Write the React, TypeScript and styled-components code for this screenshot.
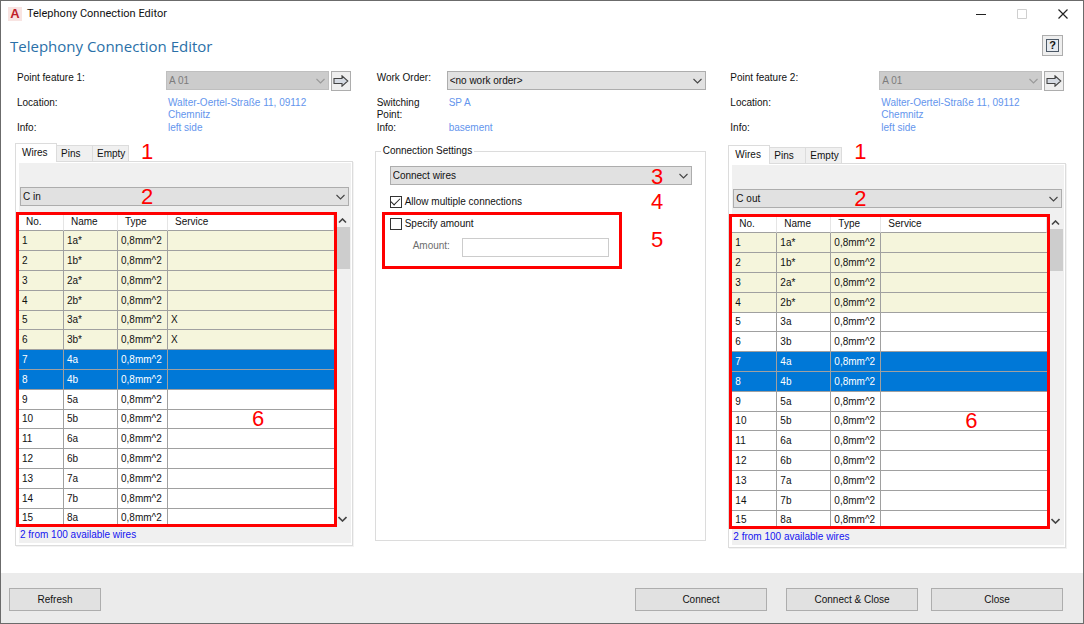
import React, { useState } from "react";
import styled, { createGlobalStyle } from "styled-components";

const GlobalStyle = createGlobalStyle`
  * { box-sizing: border-box; }
  body {
    margin: 0;
    background: #fff;
    color: #111;
    font: 10px/12px "Liberation Sans", Arial, sans-serif;
  }
  button, input, select { font: inherit; color: inherit; margin: 0; border-radius: 0; }
`;

const Window = styled.div`
  display: flex;
  flex-direction: column;
  min-height: 100vh;
  border: 1px solid #6b6b6b;
`;

const TitleBar = styled.header`
  display: flex;
  align-items: center;
  height: 26px;
  padding-left: 7px;
  font: 11px/16px Roboto, "Open Sans", sans-serif;
`;

const Logo = styled.span`
  width: 14px;
  height: 14px;
  margin-right: 5px;
  background: #f8e4e2;
  color: #c01f2a;
  font: bold 13px/13px "Liberation Sans", sans-serif;
  text-align: center;
`;

const TitleText = styled.span`
  flex: 1;
`;

const CaptionButton = styled.button<{ $faded?: boolean }>`
  display: grid;
  place-items: center;
  width: 41px;
  height: 26px;
  padding: 0;
  border: 0;
  background: none;
  color: ${(p) => (p.$faded ? "#cfcfcf" : "#222")};
`;

const Heading = styled.div`
  display: flex;
  align-items: center;
  justify-content: space-between;
  height: 37px;
  padding: 0 20px 0 9px;
`;

const HeadingText = styled.h1`
  margin: 0;
  color: #2a70a8;
  font: 15px/20px "Open Sans", "Noto Sans", sans-serif;
`;

const IconButton = styled.button<{ $size: number }>`
  display: grid;
  place-items: center;
  flex: none;
  width: ${(p) => p.$size}px;
  height: ${(p) => p.$size}px;
  padding: 0;
  border: 1px solid #adadad;
  background: #eee;
`;

const Columns = styled.main`
  display: grid;
  grid-template-columns: 338fr 332fr 338fr;
  column-gap: 22px;
  padding: 7px 17px 24px 14px;
`;

const Column = styled.section`
  position: relative;
  min-width: 0;
`;

const Details = styled.div<{ $label: number }>`
  display: grid;
  grid-template-columns: ${(p) => p.$label}px 1fr;
  grid-template-rows: 26px 25px 12px;
  padding-left: 2px;
  height: 66px;
`;

const Label = styled.label`
  padding-top: 1px;
`;

const Caption = styled.span<{ $narrow?: boolean }>`
  width: ${(p) => (p.$narrow ? "50px" : "auto")};
`;

const Value = styled.span`
  max-width: 160px;
  padding-left: 2px;
  color: #6495ed;
`;

const PickerRow = styled.div<{ $inset?: boolean }>`
  display: flex;
  align-items: flex-start;
  gap: 2px;
  padding-right: ${(p) => (p.$inset ? 2 : 0)}px;
`;

const SelectBox = styled.div`
  position: relative;
  flex: 1;
  min-width: 0;
  height: 20px;

  svg {
    position: absolute;
    right: 4px;
    top: 7px;
    pointer-events: none;
  }
`;

const Select = styled.select`
  display: block;
  width: 100%;
  height: 19px;
  padding: 0 16px 0 2px;
  border: 1px solid #adadad;
  background: #e1e1e1;
  appearance: none;

  &:disabled {
    border-color: #bfbfbf;
    background: #ccc;
    color: #7c7c7c;
    opacity: 1;
  }
`;

const Badge = styled.span<{ $top: number; $left?: number; $right?: number }>`
  position: absolute;
  z-index: 2;
  top: ${(p) => p.$top}px;
  left: ${(p) => (p.$left === undefined ? "auto" : `${p.$left}px`)};
  right: ${(p) => (p.$right === undefined ? "auto" : `${p.$right}px`)};
  color: #f00;
  font-size: 22px;
  line-height: 22px;
  pointer-events: none;
`;

const Tabs = styled.div<{ $drop: number }>`
  display: flex;
  align-items: flex-end;
  margin-top: ${(p) => 6 + p.$drop}px;
`;

const Tab = styled.button<{ $active: boolean; $width: number }>`
  width: ${(p) => p.$width}px;
  height: ${(p) => (p.$active ? 19 : 16)}px;
  margin-bottom: ${(p) => (p.$active ? -1 : 0)}px;
  padding: ${(p) => (p.$active ? "0 0 1px 6px" : "1px 0 0 4px")};
  position: relative;
  border: 1px solid #dcdcdc;
  border-bottom: 0;
  border-left-width: ${(p) => (p.$active ? 1 : 0)}px;
  background: ${(p) => (p.$active ? "#fff" : "#f0f0f0")};
  text-align: left;
  white-space: nowrap;
`;

const Panel = styled.div`
  padding: 1px 1px 2px 3px;
  border: 1px solid #dcdcdc;
  box-shadow: 1px 1px 0 #f3f3f3;
`;

const PanelBody = styled.div`
  padding-top: 24px;
  background: #f0f0f0;
`;

const Cabinet = styled.div`
  display: flex;
  padding: 0 2px 0 1px;
`;

const TableArea = styled.div`
  display: flex;
  margin: 5px 0 0 -3px;
`;

const TableFrame = styled.div`
  position: relative;
  flex: 1;
  min-width: 0;
  height: 315px;
  overflow: hidden;
  border: 3px solid #f00;
  background: #fff;
`;

const WireTable = styled.table`
  width: 100%;
  table-layout: fixed;
  border-collapse: separate;
  border-spacing: 0;
`;

const HeadCell = styled.th<{ $width?: number }>`
  width: ${(p) => (p.$width ? `${p.$width}px` : "auto")};
  height: 16px;
  padding: 0 0 2px 7px;
  border-right: 1px solid #e5e5e5;
  border-bottom: 1px solid #a0a0a0;
  font-weight: normal;
  line-height: 12px;
  text-align: left;
`;

const rowColors = { used: "#f5f5dc", picked: "#0078d7", free: "#fff" };
type RowKind = keyof typeof rowColors;

const WireRow = styled.tr<{ $kind: RowKind }>`
  height: 20px;
  background: ${(p) => rowColors[p.$kind]};
  color: ${(p) => (p.$kind === "picked" ? "#fff" : "#111")};

  &:nth-child(5n) { height: 19px; }

  td {
    padding: 0 0 0 3px;
    border-right: 1px solid #a0a0a0;
    border-bottom: 1px solid #a0a0a0;
    line-height: 12px;
    white-space: nowrap;
  }
  td:last-child { border-right: 0; }
`;

const ScrollBar = styled.div`
  display: flex;
  flex-direction: column;
  width: 14px;
  padding: 2px 1px 2px 0;
`;

const ScrollButton = styled.button`
  display: grid;
  place-items: center;
  width: 12px;
  height: 13px;
  padding: 0;
  border: 0;
  background: none;
`;

const Thumb = styled.div`
  flex: 0 0 42px;
  background: #cdcdcd;
`;

const Track = styled.div`
  flex: 1;
`;

const Status = styled.p`
  margin: 0;
  padding: 2px 1px;
  color: #1414f0;
`;

const Settings = styled.fieldset`
  position: relative;
  min-width: 0;
  min-height: 396px;
  margin: 8px 0 0;
  padding: 9px 0 0;
  border: 1px solid #dcdcdc;
`;

const Legend = styled.legend`
  margin-left: 5px;
  padding: 0 2px;
`;

const ModeRow = styled.div`
  display: flex;
  margin: 0 13px 0 14px;
`;

const OptionRow = styled.div<{ $framed?: boolean }>`
  display: flex;
  align-items: center;
  gap: 3px;
  height: 12px;
  margin: ${(p) => (p.$framed ? "3px 0 0 5px" : "10px 0 4px 14px")};
`;

const CheckBox = styled.input`
  appearance: none;
  display: grid;
  place-items: center;
  width: 12px;
  height: 12px;
  border: 1px solid #333;
  background: #fff;

  &:checked::after {
    content: "";
    width: 8px;
    height: 4px;
    margin-top: -3px;
    border: solid #222;
    border-width: 0 0 1px 1px;
    transform: rotate(-45deg);
  }
`;

const AmountFrame = styled.div`
  width: 240px;
  height: 57px;
  margin-left: 6px;
  border: 3px solid #f00;
`;

const AmountRow = styled.div`
  display: flex;
  align-items: center;
  margin: 8px 10px 0 28px;
  color: #6d6d6d;
`;

const AmountLabel = styled.label`
  flex: 0 0 49px;
  margin-top: -4px;
`;

const AmountInput = styled.input`
  flex: 1;
  min-width: 0;
  height: 19px;
  border: 1px solid #ccc;
  background: #fff;
`;

const Footer = styled.footer`
  display: flex;
  align-items: flex-start;
  height: 50px;
  margin-top: auto;
  padding: 15px 20px 0 8px;
  background: #ebebeb;
`;

const PushButton = styled.button<{ $width: number; $before?: string }>`
  width: ${(p) => p.$width}px;
  height: 23px;
  margin-left: ${(p) => p.$before ?? "0"};
  padding: 0;
  border: 1px solid #adadad;
  background: #e1e1e1;
`;

const Chevron = ({ color = "#444", up = false, heavy = false }) => (
  <svg width="9" height="6" viewBox="0 0 9 6" fill="none" stroke={color} strokeWidth={heavy ? 1.6 : 1.1}>
    <path d={up ? "M1 4.5 4.5 1 8 4.5" : "M.5 1 4.5 5 8.5 1"} />
  </svg>
);

const ArrowIcon = () => (
  <svg width="16" height="12" viewBox="0 0 16 12">
    <path d="M1 3.5H9V.8L14.8 6 9 11.2V8.5H1Z" fill="#d5dae2" stroke="#444" strokeWidth="1.1" />
  </svg>
);

const HelpGlyph = styled.span`
  display: block;
  width: 13px;
  height: 13px;
  border: 1px solid #4b5866;
  background: #e6eaef;
  color: #111;
  font: bold 11px/11px "Liberation Sans", sans-serif;
  text-align: center;
`;

type Wire = { name: string; kind: RowKind; service?: string };

const pairNames = ["1a", "1b", "2a", "2b", "3a", "3b", "4a", "4b", "5a", "5b", "6a", "6b", "7a", "7b", "8a"];

const makeWires = (used: number, serviced: number[]): Wire[] =>
  pairNames.map((n, i) => ({
    name: i < used ? `${n}*` : n,
    kind: i < used ? "used" : i === 6 || i === 7 ? "picked" : "free",
    service: serviced.includes(i + 1) ? "X" : "",
  }));

const tabList = [
  { name: "Wires", width: 42 },
  { name: "Pins", width: 36 },
  { name: "Empty", width: 36 },
];

type PointProps = { index: number; cabinet: string; wires: Wire[]; drop?: number };

function PointColumn({ index, cabinet, wires, drop = 0 }: PointProps) {
  const [tab, setTab] = useState("Wires");
  const id = `point-${index}`;
  return (
    <Column>
      <Details $label={149}>
        <Label htmlFor={id}>Point feature {index}:</Label>
        <PickerRow $inset>
          <SelectBox>
            <Select id={id} disabled>
              <option>A 01</option>
            </Select>
            <Chevron color="#999" />
          </SelectBox>
          <IconButton $size={20} aria-label="Go to feature">
            <ArrowIcon />
          </IconButton>
        </PickerRow>
        <Caption>Location:</Caption>
        <Value>Walter-Oertel-Straße 11, 09112 Chemnitz</Value>
        <Caption>Info:</Caption>
        <Value>left side</Value>
      </Details>
      <Badge $top={70} $left={126}>1</Badge>
      <Tabs $drop={drop} role="tablist">
        {tabList.map((t) => (
          <Tab
            key={t.name}
            role="tab"
            aria-selected={tab === t.name}
            $active={tab === t.name}
            $width={t.width}
            onClick={() => setTab(t.name)}
          >
            {t.name}
          </Tab>
        ))}
      </Tabs>
      <Panel>
        <PanelBody>
          <Cabinet>
            <SelectBox>
              <Select aria-label="Cable">
                <option>{cabinet}</option>
              </Select>
              <Chevron />
              <Badge $top={-1} $left={121}>2</Badge>
            </SelectBox>
          </Cabinet>
          <TableArea>
            <TableFrame>
              <WireTable>
                <thead>
                  <tr>
                    <HeadCell $width={45}>No.</HeadCell>
                    <HeadCell $width={54}>Name</HeadCell>
                    <HeadCell $width={50}>Type</HeadCell>
                    <HeadCell>Service</HeadCell>
                  </tr>
                </thead>
                <tbody>
                  {wires.map((w, i) => (
                    <WireRow key={w.name} $kind={w.kind}>
                      <td>{i + 1}</td>
                      <td>{w.name}</td>
                      <td>0,8mm^2</td>
                      <td>{w.service}</td>
                    </WireRow>
                  ))}
                </tbody>
              </WireTable>
              <Badge $top={193} $left={233}>6</Badge>
            </TableFrame>
            <ScrollBar>
              <ScrollButton aria-label="Scroll up">
                <Chevron up heavy />
              </ScrollButton>
              <Thumb />
              <Track />
              <ScrollButton aria-label="Scroll down">
                <Chevron heavy />
              </ScrollButton>
            </ScrollBar>
          </TableArea>
          <Status>2 from 100 available wires</Status>
        </PanelBody>
      </Panel>
    </Column>
  );
}

export default function App() {
  const [multiple, setMultiple] = useState(true);
  const [specify, setSpecify] = useState(false);
  return (
    <>
      <GlobalStyle />
      <Window>
        <TitleBar>
          <Logo>A</Logo>
          <TitleText>Telephony Connection Editor</TitleText>
          <CaptionButton aria-label="Minimize">
            <svg width="10" height="10"><path d="M0 5.5H10" stroke="currentColor" /></svg>
          </CaptionButton>
          <CaptionButton aria-label="Maximize" $faded>
            <svg width="10" height="10"><path d="M.5 .5H9.5V9.5H.5Z" stroke="currentColor" fill="none" /></svg>
          </CaptionButton>
          <CaptionButton aria-label="Close window">
            <svg width="10" height="10"><path d="M.5 .5 9.5 9.5M9.5 .5 .5 9.5" stroke="currentColor" strokeWidth="1.2" /></svg>
          </CaptionButton>
        </TitleBar>
        <Heading>
          <HeadingText>Telephony Connection Editor</HeadingText>
          <IconButton $size={21} aria-label="Help">
            <HelpGlyph>?</HelpGlyph>
          </IconButton>
        </Heading>
        <Columns>
          <PointColumn index={1} cabinet="C in" wires={makeWires(6, [5, 6])} />
          <Column>
            <Details $label={70}>
              <Label htmlFor="work-order">Work Order:</Label>
              <PickerRow>
                <SelectBox>
                  <Select id="work-order">
                    <option>&lt;no work order&gt;</option>
                  </Select>
                  <Chevron />
                </SelectBox>
              </PickerRow>
              <Caption $narrow>Switching Point:</Caption>
              <Value>SP A</Value>
              <Caption>Info:</Caption>
              <Value>basement</Value>
            </Details>
            <Settings>
              <Legend>Connection Settings</Legend>
              <ModeRow>
                <SelectBox>
                  <Select aria-label="Connection mode">
                    <option>Connect wires</option>
                  </Select>
                  <Chevron />
                </SelectBox>
              </ModeRow>
              <OptionRow>
                <CheckBox id="multiple" type="checkbox" checked={multiple} onChange={() => setMultiple(!multiple)} />
                <label htmlFor="multiple">Allow multiple connections</label>
              </OptionRow>
              <AmountFrame>
                <OptionRow $framed>
                  <CheckBox id="specify" type="checkbox" checked={specify} onChange={() => setSpecify(!specify)} />
                  <label htmlFor="specify">Specify amount</label>
                </OptionRow>
                <AmountRow>
                  <AmountLabel htmlFor="amount">Amount:</AmountLabel>
                  <AmountInput id="amount" disabled={!specify} />
                </AmountRow>
              </AmountFrame>
              <Badge $top={9} $right={42}>3</Badge>
              <Badge $top={34} $right={42}>4</Badge>
              <Badge $top={72} $right={42}>5</Badge>
            </Settings>
          </Column>
          <PointColumn index={2} cabinet="C out" wires={makeWires(4, [])} drop={2} />
        </Columns>
        <Footer>
          <PushButton $width={92}>Refresh</PushButton>
          <PushButton $width={132} $before="auto">Connect</PushButton>
          <PushButton $width={132} $before="19px">Connect &amp; Close</PushButton>
          <PushButton $width={132} $before="13px">Close</PushButton>
        </Footer>
      </Window>
    </>
  );
}
